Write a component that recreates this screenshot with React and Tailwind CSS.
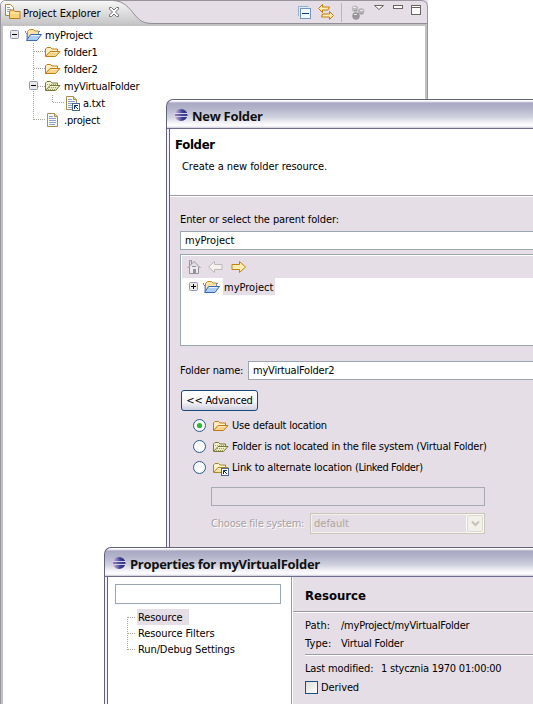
import React from "react";

function FolderIcon({ kind = "plain" }) {
  const blue = kind === "project";
  const green = kind === "virtual";
  const linked = kind === "linked";
  const line = green ? "#7a7838" : linked ? "#a8862e" : "#c27a14";
  const front = green ? "#e6e8bd" : linked ? "#f3e2a6" : "#fbd48a";
  const back = green ? "#f4f3d0" : linked ? "#fdf3cf" : "#fff0c4";
  if (blue)
    return (
      <svg width="17" height="16" viewBox="0 0 17 16" className="shrink-0">
        <path d="M2.500 12.500V4.500l2-2h4l1.500 1.500h3.500v3.500" fill="#fbe3a6" stroke="#c08a2c" />
        <path d="M0.500 4v1.500L2 7v5.500M13.500 7V4.500H15" fill="none" stroke="#6a86c0" />
        <path d="M1.500 13.500l4-6h11l-4.500 6z" fill="#a9cdf3" stroke="#3f67b1" />
        <path d="M6 8.500h8.500" stroke="#e4f1fd" />
      </svg>
    );
  return (
    <svg width="16" height="16" viewBox="0 0 16 16" className="shrink-0">
      <path d="M0.500 12V5l1.500-1.500h3.500L7 5h5.500v2.500" fill={back} stroke={line} />
      <path d="M0.500 12.500l4.500-5h10l-4.500 5z" fill={front} stroke={line} />
      <path d="M5.500 8.500h7" stroke={back} />
      {green && <path d="M4 9.500h8M3 11.500h8M2 6.500h9" stroke="#9ca565" strokeDasharray="1 1" />}
      {linked && <LinkMark />}
    </svg>
  );
}

function LinkMark() {
  return (
    <g>
      <rect x="8.500" y="8.500" width="7" height="7" fill="#fff" stroke="#4a6796" />
      <path d="M10.500 14v-3.500H14M10.500 10.500l3.500 3.500" fill="none" stroke="#15305f" />
    </g>
  );
}

function FileIcon({ linked }) {
  return (
    <svg width="16" height="16" viewBox="0 0 16 16" className="shrink-0">
      <path d="M2.500 1.500h7l3 3v10h-10z" fill="#fbfaf0" stroke="#a58f55" />
      <path d="M9.500 1.500v3h3" fill="#e8d9a0" stroke="#a58f55" />
      <path d="M4 4.500h4M4 6.500h7M4 8.500h7M4 10.500h7M4 12.500h6" stroke="#8aa2d0" />
      {linked && <LinkMark />}
    </svg>
  );
}

function Expander({ plus }) {
  return (
    <svg width="9" height="9" viewBox="0 0 9 9" className="shrink-0">
      <rect x="0.500" y="0.500" width="8" height="8" rx="1" fill="#ebe9ec" stroke="#9298a8" />
      <path d={plus ? "M2 4.500h5M4.500 2v5" : "M2 4.500h5"} stroke="#000" />
    </svg>
  );
}

function Eclipse() {
  return (
    <svg width="14" height="14" viewBox="0 0 14 14" className="relative top-px shrink-0">
      <defs>
        <linearGradient id="ecl" x1="0" x2="1">
          <stop offset="0" stopColor="#ecc0d4" />
          <stop offset=".3" stopColor="#8a84bd" />
          <stop offset=".6" stopColor="#3d3d92" />
          <stop offset="1" stopColor="#262868" />
        </linearGradient>
      </defs>
      <ellipse cx="7" cy="7" rx="6.500" ry="6" fill="url(#ecl)" />
      <path d="M0 5.500h14M0 8.500h14" stroke="#d3d0ee" />
      <path d="M1 7h12" stroke="#4b4b99" />
    </svg>
  );
}

function Explorer() {
  return (
    <section className="absolute left-0 top-0 flex h-[704px] w-[428px] flex-col">
      <header className="relative flex h-6 shrink-0 items-start">
        <svg width="428" height="26" viewBox="0 0 428 26" className="absolute left-0 top-0">
          <defs>
            <linearGradient id="tab" x1="0" y1="0" x2="0" y2="1">
              <stop offset="0" stopColor="#f7f7f7" />
              <stop offset="1" stopColor="#c2c1c3" />
            </linearGradient>
          </defs>
          <path d="M422 0H428V7z" fill="#e5dee6" />
          <path d="M0.500 26V6Q0.500 0.500 6 0.500H421Q427.500 0.500 427.500 7V26z" fill="#e5dee6" stroke="#99959c" />
          <path d="M1 26V6Q1 1 6 1H113C124 1 129 8 134 14S143 23 152 23H427V26z" fill="url(#tab)" />
          <path d="M152 23H427V26H152z" fill="#c2c1c3" />
          <path d="M113 0.500C124 1 129 8 134 14S143 23.500 152 23.500H427" fill="none" stroke="#928e95" />
        </svg>
        <div className="relative flex h-6 w-full items-center pl-[5px]">
          <svg width="16" height="16" viewBox="0 0 16 16" className="shrink-0">
            <path d="M0.500 0.500h5l3 3v8h-8z" fill="#fffdf0" stroke="#a58a4a" />
            <path d="M2 3.500h3M2 5.500h4M2 7.500h3" stroke="#8aa2d0" />
            <path d="M4.500 14.500V7.500l1-1.500h3l1.500 1.500h5v7z" fill="#fbd27a" stroke="#b97b1c" />
            <path d="M5.500 9h9" stroke="#fff0c0" />
          </svg>
          <span className="relative top-px ml-[2px] w-[77px] tracking-[-0.04px]">Project Explorer</span>
          <svg width="12" height="12" viewBox="0 0 12 12" className="ml-[8px]">
            <path d="M1.500 1.500h2L6 4l2.500-2.500h2v1.500L7.500 6l3 3v1.500h-2L6 8l-2.500 2.500h-2V9l3-3-3-3z" fill="#fff" stroke="#77737a" />
          </svg>
          <div className="ml-auto flex h-6 items-start pr-[6px] pt-1">
            <svg width="14" height="16" viewBox="0 0 14 16" className="mt-[1px]">
              <path d="M1.500 11V1.500h10" fill="none" stroke="#91b1cf" />
              <rect x="2" y="2" width="9" height="9" fill="#dcecf8" />
              <rect x="3.500" y="3.500" width="10" height="10" fill="#eef8fe" stroke="#7794ba" />
              <path d="M5 8.500h7" stroke="#0b3b74" />
            </svg>
            <svg width="16" height="16" viewBox="0 0 16 16" className="ml-[7px]">
              <path d="M0.500 4.500l4-4v2.500h7l-1.500 3h-5.500v2.500z" fill="#ffedb0" stroke="#c07d0c" />
              <path d="M15.500 11.500l-4-4v2.500h-7l-1 3h8v2.500z" fill="#ffedb0" stroke="#c07d0c" />
            </svg>
            <div className="-mt-[1px] ml-[7px] h-[19px] w-px bg-[#b8b4bb]" />
            <svg width="14" height="15" viewBox="0 0 14 15" className="ml-[9px] mt-[1px]">
              <circle cx="4" cy="3.800" r="3.200" fill="#bdbbbd" />
              <circle cx="10.200" cy="6.500" r="3.200" fill="#b4b2b4" />
              <circle cx="5" cy="11" r="3.700" fill="#969496" />
              <path d="M2 2.500h3M9 5.500h3M3 9.500h3" stroke="#ececec" />
              <path d="M3 5.500h3M9 8.500h3M3 13h4" stroke="#a09ea0" />
            </svg>
            <svg width="11" height="7" viewBox="0 0 11 7" className="ml-[9px]">
              <path d="M0.500 1.500h9L5 5.500z" fill="#fff" stroke="#6a6560" />
            </svg>
            <svg width="11" height="5" viewBox="0 0 11 5" className="ml-[8px]">
              <rect x="0.500" y="1.500" width="9" height="3" fill="#fff" stroke="#6a6560" />
            </svg>
            <svg width="11" height="12" viewBox="0 0 11 12" className="ml-[7px]">
              <rect x="0.500" y="1.500" width="9" height="9" fill="#fff" stroke="#6a6560" />
              <path d="M0 3.500h10" stroke="#6a6560" />
            </svg>
          </div>
        </div>
      </header>
      <div className="relative flex flex-1 flex-col border-x border-[#99959c] bg-[#c2c1c3] px-[2px] pt-[2px]">
        <div className="relative flex-1 bg-white">
          <svg width="70" height="110" viewBox="0 0 70 110" className="absolute left-0 top-0">
            <path
              d="M30.500 17V94M31 25.500H42M31 42.500H42M31 60.500H42M31 93.500H42M49.500 69V77M50 76.500H62"
              fill="none"
              stroke="#a7a39a"
              strokeDasharray="1 1"
            />
          </svg>
          <TreeRow indent="pl-[7px]" icon={<FolderIcon kind="project" />} expander text="myProject" gap="ml-[6px]" />
          <TreeRow indent="pl-[42px]" icon={<FolderIcon />} text="folder1" />
          <TreeRow indent="pl-[42px]" icon={<FolderIcon />} text="folder2" />
          <TreeRow indent="pl-[26px]" icon={<FolderIcon kind="virtual" />} expander text="myVirtualFolder" gap="ml-[7px]" />
          <TreeRow indent="pl-[61px]" icon={<FileIcon linked />} text="a.txt" />
          <TreeRow indent="pl-[42px]" icon={<FileIcon />} text=".project" />
        </div>
      </div>
    </section>
  );
}

function TreeRow({ indent, icon, expander, text, gap }) {
  return (
    <div className={`relative flex h-[17px] items-center ${indent}`}>
      {expander && <Expander />}
      <span className={gap}>{icon}</span>
      <span className="relative top-px ml-[3px] tracking-[-0.2px]">{text}</span>
    </div>
  );
}

function TitleBar({ children }) {
  return (
    <div className="flex h-[30px] shrink-0 items-center rounded-tl-[7px] border-b border-l border-t border-b-[#6c6c90] border-l-[#63637f] border-t-[#63637f] bg-[linear-gradient(180deg,#fff_0px,#fff_1px,#a9a8c4_3px,#b4b5cc_9px,#d0d1de_17px,#f6f4f9_23px,#fff_26px,#c9c8d8_28px)] pl-[7px]">
      <Eclipse />
      <span className="relative top-[2px] ml-[4px] font-['Open_Sans','Noto_Sans',sans-serif] text-[13px] font-bold tracking-[-0.3px] text-[#111]">{children}</span>
    </div>
  );
}

function Dialog({ place, title, children }) {
  return (
    <section className={`absolute right-0 flex flex-col ${place}`}>
      <TitleBar>{title}</TitleBar>
      <div className="flex flex-1 border-l border-[#63637f] bg-[#f4f2f8] pl-[2px]">
        <div className="flex flex-1 flex-col border-l border-[#63637f] bg-[#e5dee6]">{children}</div>
      </div>
    </section>
  );
}

function Radio({ checked, icon, children }) {
  return (
    <div className="flex h-[21px] items-center pl-[23px]">
      <svg width="13" height="13" viewBox="0 0 13 13">
        <circle cx="6.500" cy="6.500" r="6" fill="#fbfbf9" stroke="#2c5a86" />
        {checked && <circle cx="6.500" cy="6.500" r="2.600" fill="#2fb52f" />}
      </svg>
      <span className="ml-[7px]">{icon}</span>
      <span className="ml-[3px] tracking-[-0.2px]">{children}</span>
    </div>
  );
}

function NewFolder() {
  return (
    <Dialog place="left-[166px] top-[99px] h-[449px]" title="New Folder">
      <div className="h-[67px] border-b border-[#9c9aa3] bg-white pl-[5px] pt-[7px]">
        <div className="h-[17px] text-[13px] font-bold leading-[17px] tracking-[-0.3px]">Folder</div>
        <div className="mt-[6px] h-[15px] pl-[7px] leading-[15px] tracking-[-0.05px]">Create a new folder resource.</div>
      </div>
      <div className="flex flex-col border-t border-white pl-[10px] pt-[15px]">
        <div className="h-[15px] leading-[15px] tracking-[-0.1px]">Enter or select the parent folder:</div>
        <div className="mt-[4px] flex h-[19px] items-center border-y border-l border-[#9aa6b0] bg-white pl-[4px]">myProject</div>
        <div className="mt-[4px] h-[92px] border-y border-l border-[#9aa6b0] bg-white pl-px pt-px">
          <div className="flex h-[22px] items-center bg-[#e5dee6] pl-[5px]">
            <svg width="14" height="16" viewBox="0 0 14 16">
              <path d="M2.500 8v6.500h9V8" fill="#eeeaee" stroke="#96929a" />
              <path d="M0.500 9L7 2.500 13.500 9M2.500 7V1.500h2V5" fill="none" stroke="#96929a" />
              <rect x="6" y="10" width="3" height="4.500" fill="#96929a" />
              <path d="M5 7.500h4" stroke="#96929a" />
            </svg>
            <svg width="15" height="14" viewBox="0 0 15 14" className="ml-[7px]">
              <path d="M0.500 7l6-5.500v3H14v5H6.500v3z" fill="#f4f1ee" stroke="#bdb9b8" />
            </svg>
            <svg width="15" height="14" viewBox="0 0 15 14" className="ml-[8px]">
              <path d="M14.500 7l-6-5.500v3H1v5h7.500v3z" fill="#ffefb0" stroke="#c1800f" />
            </svg>
          </div>
          <div className="flex h-[17px] items-center pl-[7px]">
            <Expander plus />
            <span className="ml-[5px]">
              <FolderIcon kind="project" />
            </span>
            <span className="ml-[3px] flex h-[17px] w-[52px] items-center bg-[#e5dee6] pl-px">
              <span className="relative top-px">myProject</span>
            </span>
          </div>
        </div>
        <div className="mt-[14px] flex h-[20px] items-center">
          <span className="w-[68px] tracking-[-0.15px]">Folder name:</span>
          <span className="flex h-[19px] flex-1 items-center border-y border-l border-[#9aa6b0] bg-white pl-[4px] tracking-[-0.2px]">myVirtualFolder2</span>
        </div>
      </div>
      <div className="mt-[10px] flex pl-[11px]">
        <button className="h-[21px] w-[77px] rounded-[3px] border border-[#1c4878] bg-[linear-gradient(180deg,#fff,#f4f4f8_60%,#cfcfe0)] leading-[19px] tracking-[-0.2px]">&lt;&lt; Advanced</button>
      </div>
      <div className="mt-[4px]">
        <Radio checked icon={<FolderIcon />}>Use default location</Radio>
        <Radio icon={<FolderIcon kind="virtual" />}>Folder is not located in the file system (Virtual Folder)</Radio>
        <Radio icon={<FolderIcon kind="linked" />}>
          <span className="tracking-[0px]">
            <span className="tracking-[-0.15px]">Link to alternate location </span>
            <span className="tracking-[-0.4px]">(Linked Folder)</span>
          </span>
        </Radio>
      </div>
      <div className="ml-[41px] mt-[9px] h-[19px] w-[274px] border border-[#a6aab2]" />
      <div className="ml-[41px] mt-[7px] flex h-[21px] w-[274px] items-center text-[#a5a1a5]">
        <span className="w-[99px] tracking-[-0.2px] [text-shadow:1px_1px_0_#fff]">Choose file system:</span>
        <div className="flex h-[21px] w-[175px] items-center border border-[#c9c7ba] p-px pl-[3px] text-[#aca899] shadow-[inset_0_0_0_1px_#f4f1ea]">
          <span>default</span>
          <span className="ml-auto flex h-[17px] w-[16px] items-center justify-center rounded-[2px] border border-[#dcdad0] bg-[#f1f0ea] outline outline-1 outline-[#fbfaf6]">
            <svg width="9" height="7" viewBox="0 0 9 7">
              <path d="M1 1.500l3.500 3.500L8 1.500" fill="none" stroke="#c4c2b6" strokeWidth="2" />
            </svg>
          </span>
        </div>
      </div>
    </Dialog>
  );
}

function Properties() {
  const pages = ["Resource", "Resource Filters", "Run/Debug Settings"];
  return (
    <Dialog place="left-[104px] top-[547px] h-[157px]" title="Properties for myVirtualFolder">
      <div className="flex flex-1">
        <div className="w-[184px] border-r border-[#9c9aa3] bg-white pl-[7px] pt-[7px]">
          <div className="h-[20px] w-[166px] border border-[#9aa6b0]" />
          <div className="relative mt-[5px] pl-[22px]">
            <svg width="24" height="48" viewBox="0 0 24 48" className="absolute left-[12px] top-0">
              <path d="M0.500 8V41M1 8.500H9M1 24.500H9M1 40.500H9" fill="none" stroke="#a7a39a" strokeDasharray="1 1" />
            </svg>
            {pages.map((page, i) => (
              <div key={page} className="flex h-4 items-center tracking-[-0.1px]">
                <span className={i === 0 ? "flex h-4 w-[52px] items-center bg-[#e5dee6] pl-px" : "pl-px"}>{page}</span>
              </div>
            ))}
          </div>
        </div>
        <div className="flex-1 border-l border-white">
          <div className="flex h-[35px] items-center border-b border-[#9c9aa3] pl-[12px] pt-[3px] text-[13px] font-bold">Resource</div>
          <div className="border-t border-white pl-[12px] pt-[3px]">
            <div className="flex h-[18px] items-center">
              <span className="w-[36px]">Path:</span>
              <span className="tracking-[-0.23px]">/myProject/myVirtualFolder</span>
            </div>
            <div className="flex h-[18px] items-center">
              <span className="w-[36px] tracking-[0.1px]">Type:</span>
              <span className="tracking-[-0.25px]">Virtual Folder</span>
            </div>
            <div className="mt-[2px] h-[2px] border-b border-t border-b-white border-t-[#9c9aa3]" />
            <div className="mt-[3px] flex h-[18px] items-center">
              <span className="w-[76px] tracking-[-0.15px]">Last modified:</span>
              <span className="tracking-[-0.23px]">1 stycznia 1970 01:00:00</span>
            </div>
            <div className="mt-[1px] flex h-[18px] items-center">
              <span className="h-[13px] w-[13px] border border-[#1c4f86] bg-[linear-gradient(135deg,#dcdcd7,#fff)]" />
              <span className="ml-[3px] tracking-[-0.1px]">Derived</span>
            </div>
          </div>
        </div>
      </div>
    </Dialog>
  );
}

export default function App() {
  return (
    <main className="relative h-[704px] w-[533px] overflow-hidden whitespace-nowrap bg-white font-['DejaVu_Sans_Condensed','DejaVu_Sans',sans-serif] text-[11px] leading-none text-black">
      <Explorer />
      <NewFolder />
      <Properties />
    </main>
  );
}
